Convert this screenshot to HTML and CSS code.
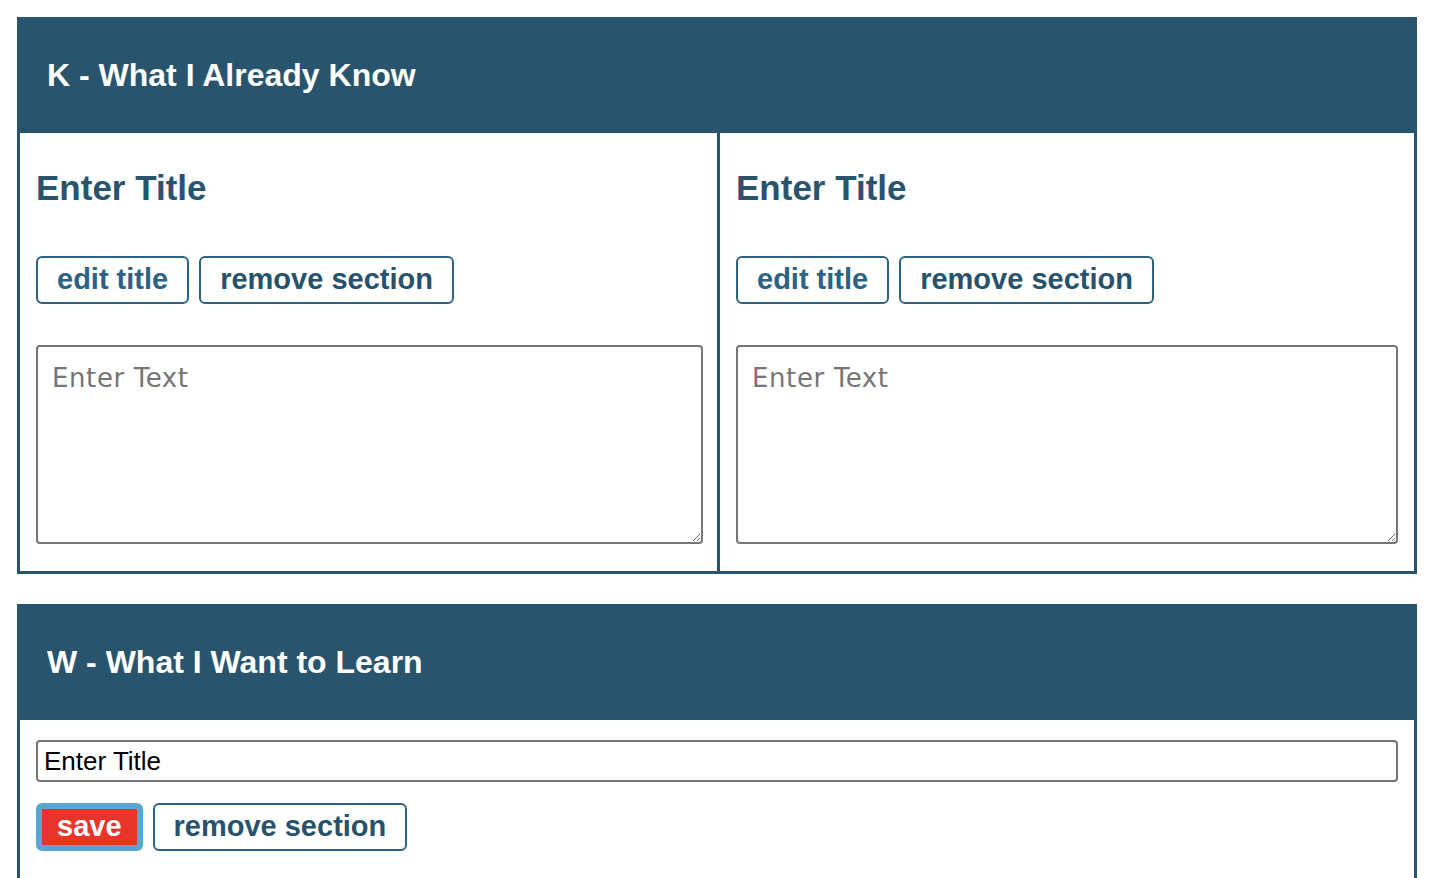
FILE: index.html
```html
<!DOCTYPE html>
<html lang="en">
<head>
<meta charset="utf-8">
<title>KWL</title>
<link rel="stylesheet" href="styles.css">
</head>
<body>
<main class="page">
  <section class="kwl">
    <h1 class="kwl-head">K - What I Already Know</h1>
    <div class="kwl-body cols">
      <div class="card card-left">
        <h2 class="card-title">Enter Title</h2>
        <div class="btn-row">
          <button class="btn btn-edit">edit title</button>
          <button class="btn">remove section</button>
        </div>
        <textarea class="note" placeholder="Enter Text"></textarea>
      </div>
      <div class="card card-right">
        <h2 class="card-title">Enter Title</h2>
        <div class="btn-row">
          <button class="btn btn-edit">edit title</button>
          <button class="btn">remove section</button>
        </div>
        <textarea class="note" placeholder="Enter Text"></textarea>
      </div>
    </div>
  </section>
  <section class="kwl">
    <h1 class="kwl-head">W - What I Want to Learn</h1>
    <div class="kwl-body">
      <div class="card card-edit">
        <input class="title-input" type="text" value="Enter Title">
        <div class="btn-row btn-row-tight">
          <button class="btn btn-save">save</button>
          <button class="btn">remove section</button>
        </div>
      </div>
    </div>
  </section>
</main>
</body>
</html>
```
FILE: styles.css
```css
* { box-sizing: border-box; }
html, body { margin: 0; background: #fff; }
body { font-family: "Liberation Sans", Arial, sans-serif; overflow: hidden; }

.page {
  padding: 17px 17px 0 17px;
  display: flex;
  flex-direction: column;
  gap: 30px;
}

.kwl {
  border: 3px solid #29546e;
  background: #fff;
}

.kwl-head {
  margin: 0;
  height: 113px;
  padding: 37px 27px 0;
  background: #29546e;
  color: #fff;
  font-size: 32px;
  font-weight: bold;
  line-height: 37px;
}

.cols {
  display: grid;
  grid-template-columns: 1fr 1fr;
}

.card {
  padding: 35px 16px 27px;
  min-width: 0;
}
.card-left { padding-right: 14px; }
.card-right { border-left: 3px solid #29546e; }

.card-title {
  margin: 0;
  color: #29546e;
  font-size: 35px;
  line-height: 39px;
  font-weight: bold;
}

.btn-row {
  display: flex;
  gap: 10px;
  margin-top: 49px;
}

.btn {
  font-family: "Liberation Sans", Arial, sans-serif;
  font-size: 29px;
  font-weight: bold;
  line-height: 33px;
  padding: 5px 19px 6px;
  border: 2px solid #2d6282;
  border-radius: 6px;
  background: #fff;
  color: #27526d;
}
.btn-edit { color: #2c6283; }

.btn-save {
  background: #e8352a;
  color: #fff;
  border: 6px solid #58a7d3;
  padding: 1px 15px 2px;
}

.note {
  display: block;
  width: 100%;
  height: 199px;
  margin-top: 41px;
  padding: 16px 14px 14px;
  border: 2px solid #767676;
  border-radius: 4px;
  font-family: "DejaVu Sans", Verdana, sans-serif;
  font-size: 26px;
  letter-spacing: 0.6px;
  line-height: 30px;
  color: #000;
  resize: both;
}
.note::placeholder { color: #757575; }

.card-edit { padding: 20px 16px 40px; }

.title-input {
  display: block;
  width: 100%;
  height: 42px;
  padding: 0 6px;
  border: 2px solid #767676;
  border-radius: 4px;
  font-family: "Liberation Sans", Arial, sans-serif;
  font-size: 26px;
  color: #000;
}

.btn-row-tight { margin-top: 21px; }
```
